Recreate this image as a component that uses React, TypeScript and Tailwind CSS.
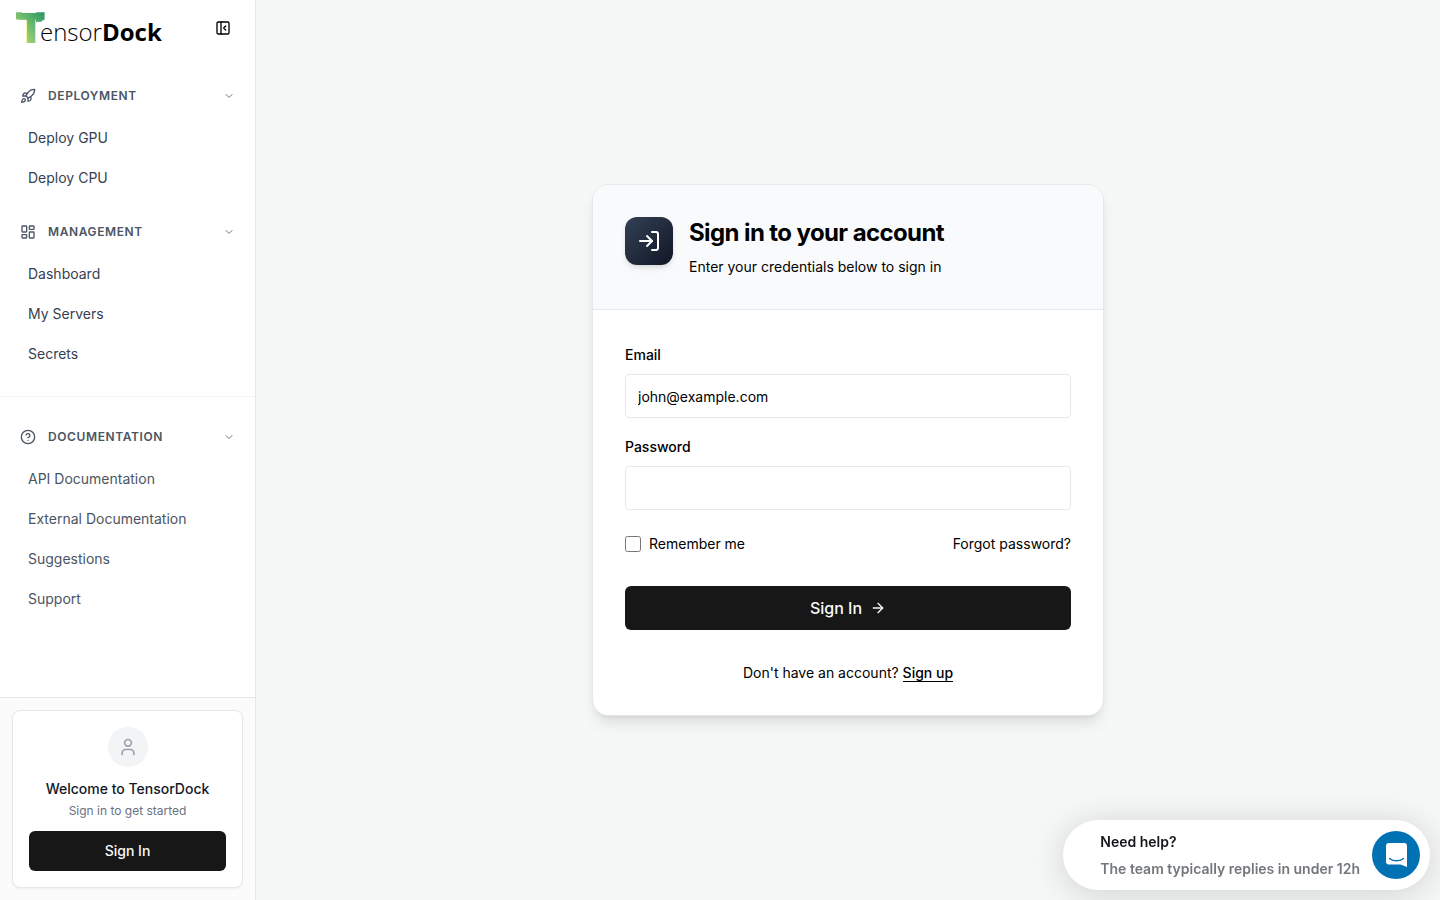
import { useState } from "react";
import type { ComponentType } from "react";
import {
  ArrowRight,
  ChevronDown,
  CircleHelp,
  LayoutDashboard,
  LogIn,
  PanelLeftClose,
  Rocket,
  User,
} from "lucide-react";

type Section = {
  title: string;
  icon: ComponentType<{ className?: string }>;
  items: string[];
  muted?: boolean;
};

const MAIN: Section[] = [
  { title: "Deployment", icon: Rocket, items: ["Deploy GPU", "Deploy CPU"] },
  { title: "Management", icon: LayoutDashboard, items: ["Dashboard", "My Servers", "Secrets"] },
];

const DOCS: Section = {
  title: "Documentation",
  icon: CircleHelp,
  items: ["API Documentation", "External Documentation", "Suggestions", "Support"],
  muted: true,
};

function Logo() {
  return (
    <a href="#home" className="flex items-end font-['Open_Sans',sans-serif] text-2xl leading-6 text-black">
      <svg viewBox="0 0 30 32" className="h-8 w-[30px] overflow-visible" aria-hidden="true">
        <defs>
          <linearGradient id="mark" gradientUnits="userSpaceOnUse" x1="29" y1="2" x2="4" y2="24">
            <stop offset="0" stopColor="#2f9468" />
            <stop offset="0.45" stopColor="#5fb56a" />
            <stop offset="1" stopColor="#a5d472" />
          </linearGradient>
        </defs>
        <text x="15" y="31" textAnchor="middle" fontSize="43" fontWeight="800" fill="url(#mark)">
          T
        </text>
        {/* arm tips and the ragged edge on the right */}
        <g fill="url(#mark)">
          <path d="M0 0.3h6v7.2H0z" />
          <path d="M20 0.3h8.6v7.2l-3 1.6-.6 1-3-.4-2 .8z" />
        </g>
      </svg>
      <span className="-ml-1.5 font-light">ensor</span>
      <span className="font-bold">Dock</span>
    </a>
  );
}

function NavSection({ title, icon: Icon, items, muted }: Section) {
  const [open, setOpen] = useState(true);
  return (
    <section>
      <button
        type="button"
        aria-expanded={open}
        onClick={() => setOpen(!open)}
        className="flex h-9 w-full items-center gap-3 px-2 text-xs font-semibold tracking-wider text-[#4b5563] uppercase"
      >
        <Icon className="size-4" />
        <span className="flex-1 text-left">{title}</span>
        <ChevronDown className="size-3 text-gray-500" />
      </button>
      {open && (
        <ul className="mt-1">
          {items.map((item) => (
            <li key={item}>
              <a
                href="#"
                className={`flex h-10 items-center rounded-md px-4 text-sm hover:bg-gray-100 ${muted ? "text-[#4b5563]" : "text-[#374151]"}`}
              >
                {item}
              </a>
            </li>
          ))}
        </ul>
      )}
    </section>
  );
}

function Sidebar() {
  return (
    <aside className="flex w-64 shrink-0 flex-col border-r border-gray-200 bg-white">
      <div className="flex h-14 items-center justify-between pr-6 pl-4">
        <Logo />
        <button type="button" aria-label="Collapse sidebar" className="text-black">
          <PanelLeftClose className="size-4" />
        </button>
      </div>
      <nav className="flex-1">
        <div className="space-y-4 border-b border-gray-100 px-3 py-[22px]">
          {MAIN.map((section) => (
            <NavSection key={section.title} {...section} />
          ))}
        </div>
        <div className="px-3 py-[22px]">
          <NavSection {...DOCS} />
        </div>
      </nav>
      <div className="border-t border-gray-200 bg-[#fbfbfb] p-3">
        <div className="flex flex-col items-center rounded-lg border border-gray-200 bg-white p-4 shadow-xs">
          <div className="flex size-10 items-center justify-center rounded-full bg-gray-100">
            <User className="size-5 text-gray-400" />
          </div>
          <p className="mt-3 text-sm font-medium text-gray-900">Welcome to TensorDock</p>
          <p className="mt-1 text-xs text-gray-500">Sign in to get started</p>
          <button type="button" className="mt-3 h-10 w-full rounded-md bg-[#171717] text-sm font-medium text-neutral-50">
            Sign In
          </button>
        </div>
      </div>
    </aside>
  );
}

function SignInCard() {
  return (
    <div className="w-full max-w-lg overflow-hidden rounded-2xl border border-gray-200 bg-white text-black shadow-lg">
      <div className="flex items-start gap-4 border-b border-gray-200 bg-linear-to-br from-slate-50 to-[#f9fafb] p-8">
        <div className="flex size-12 items-center justify-center rounded-xl bg-linear-to-br from-[#334155] to-[#111827] text-white shadow-md">
          <LogIn className="size-6" />
        </div>
        <div>
          <h1 className="text-2xl leading-8 font-bold tracking-tight">Sign in to your account</h1>
          <p className="mt-2 text-sm">Enter your credentials below to sign in</p>
        </div>
      </div>
      <form className="p-8" onSubmit={(e) => e.preventDefault()}>
        <label htmlFor="email" className="block text-sm leading-[26px] font-medium">
          Email
        </label>
        <input
          id="email"
          type="email"
          placeholder="john@example.com"
          className="mt-1.5 h-11 w-full rounded-sm border border-gray-200 px-3 text-sm placeholder:text-black"
        />
        <label htmlFor="password" className="mt-4 block text-sm leading-[26px] font-medium">
          Password
        </label>
        <input
          id="password"
          type="password"
          className="mt-1.5 h-11 w-full rounded-sm border border-gray-200 px-3 text-sm"
        />
        <div className="mt-6 flex items-center justify-between text-sm">
          <label htmlFor="remember" className="flex items-center gap-2">
            <input id="remember" type="checkbox" className="size-4" />
            Remember me
          </label>
          <a href="#forgot">Forgot password?</a>
        </div>
        <button
          type="submit"
          className="mt-8 flex h-11 w-full items-center justify-center gap-2 rounded-md bg-[#171717] text-base font-medium text-neutral-50"
        >
          Sign In
          <ArrowRight className="size-4" />
        </button>
        <p className="mt-8 text-center text-sm leading-[21px]">
          Don't have an account?{" "}
          <a href="#signup" className="border-b border-black font-medium">
            Sign up
          </a>
        </p>
      </form>
    </div>
  );
}

function HelpWidget() {
  return (
    <div className="fixed right-2.5 bottom-2.5 flex h-[70px] items-center gap-3 rounded-full bg-white pr-2.5 pl-[37px] shadow-[0_4px_36px_rgba(9,14,21,0.16)]">
      <div className="text-sm leading-[27px] font-semibold">
        <p className="text-[#14161a]">Need help?</p>
        <p className="text-[#73767a]">The team typically replies in under 12h</p>
      </div>
      <button
        type="button"
        aria-label="Open chat"
        className="flex size-12 items-center justify-center rounded-full bg-[#0071b2]"
      >
        <svg viewBox="0 0 28 32" className="h-6 w-[21px]" fill="white">
          <path d="M28 32s-4.714-1.855-8.527-3.34H3.437C1.54 28.66 0 27.026 0 25.013V3.644C0 1.633 1.54 0 3.437 0h21.125c1.898 0 3.437 1.632 3.437 3.645v18.404H28V32zm-4.139-11.982a.88.88 0 00-1.292-.105c-.03.026-3.015 2.681-8.57 2.681-5.486 0-8.517-2.636-8.571-2.684a.88.88 0 00-1.29.107 1.01 1.01 0 00-.219.708.992.992 0 00.318.664c.142.128 3.537 3.15 9.762 3.15 6.226 0 9.621-3.022 9.763-3.15a.992.992 0 00.317-.664 1.01 1.01 0 00-.218-.707z" />
        </svg>
      </button>
    </div>
  );
}

export default function App() {
  return (
    <div className="flex min-h-screen bg-[#f6f8f7] font-['Inter',sans-serif] antialiased">
      <Sidebar />
      <main className="flex flex-1 items-center justify-center p-6">
        <SignInCard />
      </main>
      <HelpWidget />
    </div>
  );
}
